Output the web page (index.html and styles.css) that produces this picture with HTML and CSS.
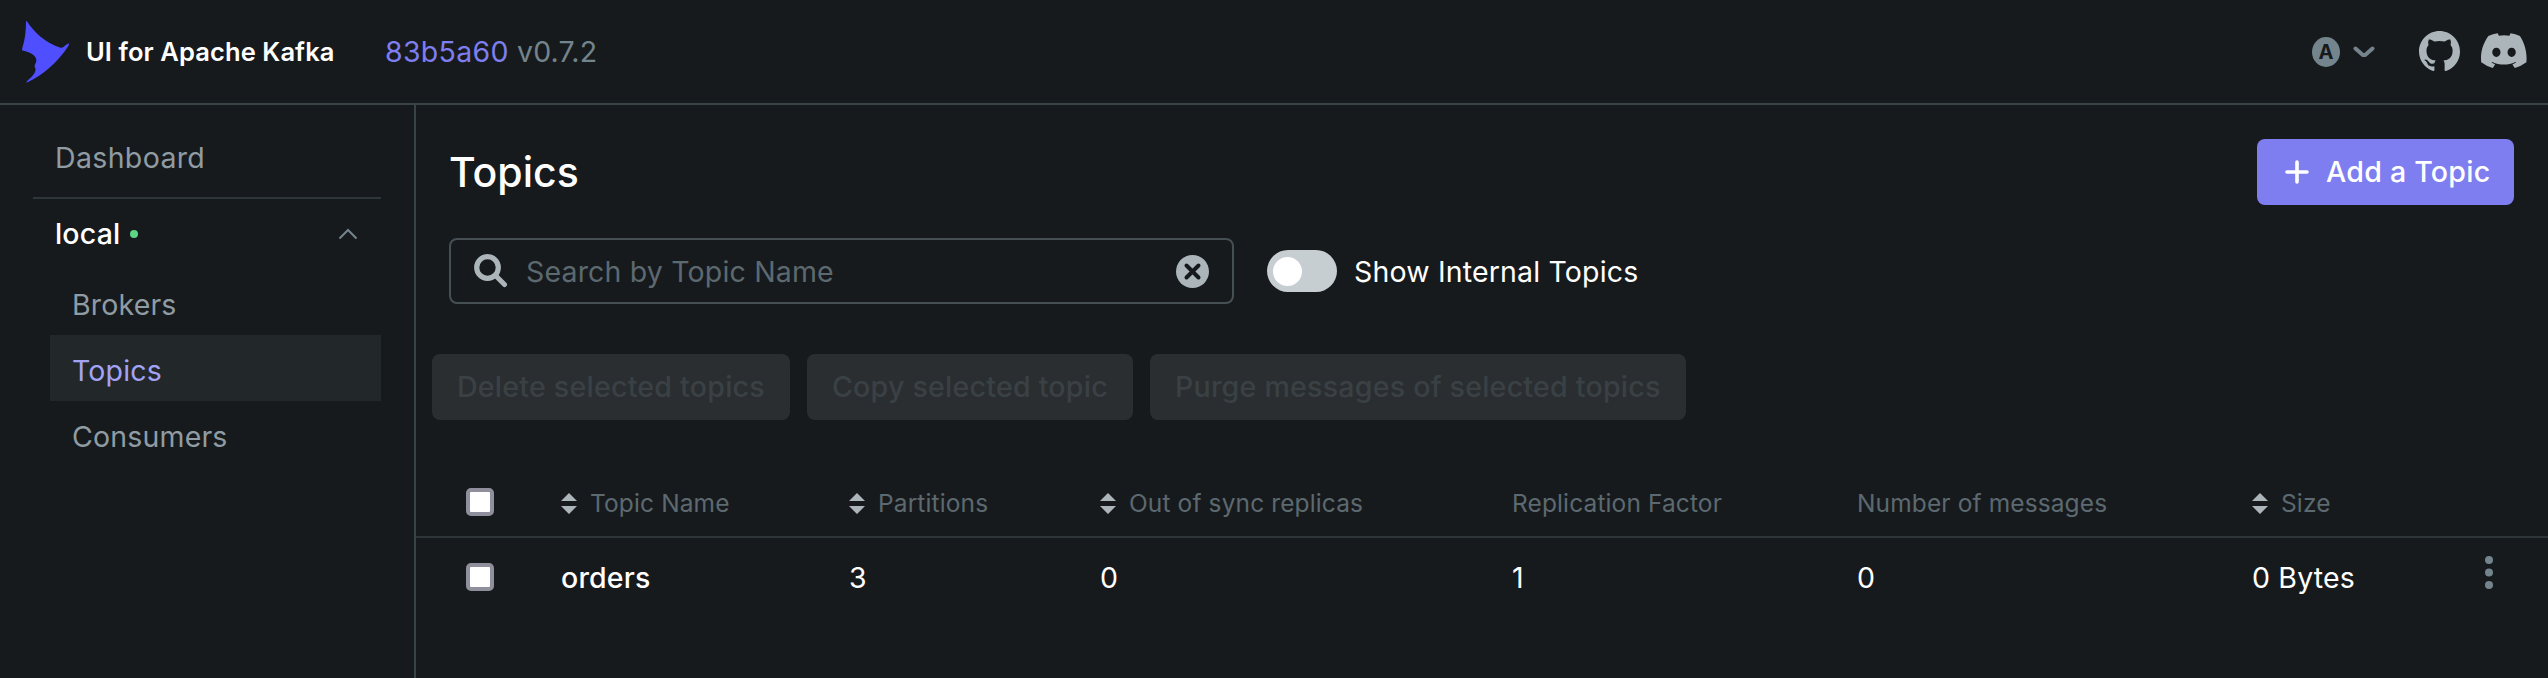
FILE: index.html
```html
<!DOCTYPE html>
<html lang="en">
<head>
<meta charset="utf-8">
<title>UI for Apache Kafka</title>
<link rel="stylesheet" href="styles.css">
</head>
<body>
<header class="navbar">
  <a class="brand">
    <svg class="logo" viewBox="0 0 48 62"><path d="M4.700 0C12 11.500 24 22 38.500 26.700Q40 27 41.500 26Q44 23.500 47 22.300Q47.300 23.500 46 25.500C36 41 21 54 5 61.500Q4 61.500 4.700 60.500C10 55.500 14 52 13.500 47.500Q12 45.500 13 43.500C17 37 12 32 .5 29.500Q-.2 29 .3 27C3 19 4 10 4 .5Z" fill="#4f4fff"/></svg>
    <span class="brand-name">UI for Apache Kafka</span>
  </a>
  <div class="version"><a class="commit">83b5a60</a> v0.7.2</div>
  <div class="nav-actions">
    <span class="avatar">A</span>
    <svg class="chev" viewBox="0 0 22 12"><path d="M2.500 2.500 9 8.300Q11 9.800 13 8.300L19.500 2.500" fill="none" stroke="#73848c" stroke-width="4" stroke-linecap="round"/></svg>
    <svg class="github" viewBox="0 0 16 16"><path fill="#abb5ba" d="M8 0C3.580 0 0 3.580 0 8c0 3.540 2.290 6.530 5.470 7.590.4.070.55-.17.55-.38 0-.19-.01-.82-.01-1.490-2.010.37-2.530-.49-2.690-.94-.09-.23-.48-.94-.82-1.130-.28-.15-.68-.52-.01-.53.63-.01 1.080.58 1.230.82.720 1.210 1.870.87 2.330.66.070-.52.280-.87.510-1.070-1.780-.2-3.640-.89-3.640-3.950 0-.87.310-1.590.82-2.150-.08-.2-.36-1.020.08-2.120 0 0 .67-.21 2.200.82.640-.18 1.320-.27 2-.27s1.360.09 2 .27c1.530-1.040 2.200-.82 2.200-.82.440 1.100.16 1.920.08 2.120.51.560.82 1.270.82 2.150 0 3.070-1.870 3.750-3.650 3.950.29.250.54.730.54 1.480 0 1.070-.01 1.930-.01 2.200 0 .21.150.46.550.38A8.010 8.010 0 0 0 16 8c0-4.420-3.580-8-8-8z"/></svg>
    <svg class="discord" viewBox="0 0 24 19"><path fill="#abb5ba" d="M20.317 1.370A19.800 19.800 0 0 0 15.432 0c-.21.375-.444.865-.608 1.250a18.270 18.270 0 0 0-5.487 0A12.600 12.600 0 0 0 8.720 0a19.700 19.700 0 0 0-4.885 1.370C.533 6.046-.32 10.580.099 15.058A19.900 19.900 0 0 0 6.130 18.100c.462-.63.874-1.295 1.226-1.994a13 13 0 0 1-1.872-.892l.372-.292c3.928 1.793 8.180 1.793 12.062 0l.373.292a12.300 12.300 0 0 1-1.873.892c.36.698.772 1.362 1.225 1.993a19.800 19.800 0 0 0 6.032-3.041c.5-5.177-.838-9.674-3.358-13.688zM8.020 12.330c-1.183 0-2.157-1.085-2.157-2.419s.955-2.419 2.157-2.419c1.210 0 2.176 1.095 2.157 2.420 0 1.333-.956 2.418-2.157 2.418zm7.975 0c-1.183 0-2.157-1.085-2.157-2.419s.955-2.419 2.157-2.419c1.210 0 2.176 1.095 2.157 2.420 0 1.333-.946 2.418-2.157 2.418z"/></svg>
  </div>
</header>
<div class="layout">
  <nav class="sidebar">
    <a class="dashboard">Dashboard</a>
    <div class="cluster">
      <span class="cluster-name">local</span><i class="status"></i>
      <svg class="up" viewBox="0 0 20 12"><path d="M1.500 10.500 10 2 18.500 10.500" fill="none" stroke="#73848c" stroke-width="2"/></svg>
    </div>
    <div class="menu">
      <a class="menu-item">Brokers</a>
      <a class="menu-item active">Topics</a>
      <a class="menu-item">Consumers</a>
    </div>
  </nav>
  <main class="content">
    <div class="heading">
      <h1>Topics</h1>
      <button class="add"><svg class="plus" viewBox="0 0 24 24"><path d="M12 2V22M2 12H22" stroke="#fff" stroke-width="3.600" stroke-linecap="round"/></svg>Add a Topic</button>
    </div>
    <div class="controls">
      <div class="search">
        <svg class="glass" viewBox="0 0 34 34"><circle cx="13.500" cy="13.500" r="10.800" fill="none" stroke="#abb5ba" stroke-width="5.200"/><path d="M22 22 30.500 30.500" stroke="#abb5ba" stroke-width="5" stroke-linecap="round"/></svg>
        <span class="placeholder">Search by Topic Name</span>
        <svg class="clear" viewBox="0 0 33 33"><circle cx="16.500" cy="16.500" r="16.500" fill="#abb5ba"/><path d="M10.500 10.500 22.500 22.500M22.500 10.500 10.500 22.500" stroke="#171a1c" stroke-width="4" stroke-linecap="round"/></svg>
      </div>
      <span class="switch"><i class="knob"></i></span>
      <span class="switch-label">Show Internal Topics</span>
    </div>
    <div class="batch">
      <button class="disabled">Delete selected topics</button>
      <button class="disabled">Copy selected topic</button>
      <button class="disabled">Purge messages of selected topics</button>
    </div>
    <div class="row head">
      <span class="check"><i class="box"></i></span>
      <span><svg class="sort" viewBox="0 0 16 21"><path d="M0 8 8 0 16 8ZM0 13H16L8 21Z" fill="#abb5ba"/></svg>Topic Name</span>
      <span><svg class="sort" viewBox="0 0 16 21"><path d="M0 8 8 0 16 8ZM0 13H16L8 21Z" fill="#abb5ba"/></svg>Partitions</span>
      <span><svg class="sort" viewBox="0 0 16 21"><path d="M0 8 8 0 16 8ZM0 13H16L8 21Z" fill="#abb5ba"/></svg>Out of sync replicas</span>
      <span>Replication Factor</span>
      <span>Number of messages</span>
      <span><svg class="sort" viewBox="0 0 16 21"><path d="M0 8 8 0 16 8ZM0 13H16L8 21Z" fill="#abb5ba"/></svg>Size</span>
      <span></span>
    </div>
    <div class="row data">
      <span class="check"><i class="box"></i></span>
      <span class="topic">orders</span>
      <span>3</span>
      <span>0</span>
      <span>1</span>
      <span>0</span>
      <span>0 Bytes</span>
      <span class="more"><svg class="dots" viewBox="0 0 8 33"><g fill="#73848c"><circle cx="4" cy="4" r="4"/><circle cx="4" cy="16.500" r="4"/><circle cx="4" cy="29" r="4"/></g></svg></span>
    </div>
  </main>
</div>
</body>
</html>
```
FILE: styles.css
```css
* { box-sizing: border-box; }
body {
  margin: 0;
  height: 678px;
  overflow: hidden;
  background: #171a1c;
  color: #fff;
  font-family: Inter, sans-serif;
  font-size: 28.500px;
  letter-spacing: .17px;
  display: flex;
  flex-direction: column;
}
svg { display: block; flex: none; }
h1 { margin: 0; padding-top: 3px; font-weight: 500; font-size: 41px; line-height: 60px; letter-spacing: 0; }
button { border: 0; font: 500 28.600px/34px Inter, sans-serif; letter-spacing: .22px; }

.navbar {
  height: 105px;
  border-bottom: 2px solid #394246;
  display: flex;
  align-items: center;
  padding: 0 21px 0 22px;
}
.brand { display: flex; align-items: center; width: 363px; }
.logo { width: 48px; height: 62px; margin-right: 16px; }
.brand-name { font-weight: 600; font-size: 25.500px; letter-spacing: .1px; white-space: nowrap; }
.version { color: #73848c; }
.commit { color: #7e7ef1; letter-spacing: .3px; }
.nav-actions { margin-left: auto; display: flex; align-items: center; }
.avatar {
  width: 28px;
  height: 30px;
  border-radius: 50%;
  background: #73848c;
  color: #171a1c;
  font-weight: 700;
  font-size: 20px;
  line-height: 30px;
  letter-spacing: 0;
  text-align: center;
}
.chev { width: 22px; height: 12px; margin: 0 44px 0 13px; }
.github { width: 41px; height: 41px; margin-right: 21px; }
.discord { width: 46px; height: 37px; }

.layout { flex: 1; display: flex; }
.sidebar {
  width: 416px;
  border-right: 2px solid #394246;
  padding: 21px 33px;
  color: #8f9ca3;
}
.dashboard {
  display: block;
  height: 73px;
  padding: 15px 22px;
  line-height: 34px;
  letter-spacing: .35px;
  border-bottom: 2px solid #2f3639;
}
.cluster {
  height: 70px;
  padding: 0 23px 0 22px;
  display: flex;
  align-items: center;
  color: #fff;
  font-weight: 500;
}
.cluster-name { padding-bottom: 2px; }
.status { width: 8px; height: 8px; border-radius: 50%; background: #5cd685; margin-left: 10px; }
.up { width: 20px; height: 12px; margin-left: auto; }
.menu { padding-left: 17px; }
.menu-item { display: block; height: 66px; padding-left: 22px; line-height: 72px; }
.active { background: #22282a; color: #a3a3f5; }

.content { flex: 1; }
.heading {
  display: flex;
  justify-content: space-between;
  align-items: flex-start;
  height: 100px;
  padding: 34px 34px 0 33px;
}
.add {
  width: 257px;
  height: 66px;
  border-radius: 8px;
  background: #7e7ef1;
  color: #fff;
  display: flex;
  align-items: center;
  padding: 0 0 0 28px;
  white-space: nowrap;
}
.plus { width: 24px; height: 24px; margin-right: 17px; }
.controls { display: flex; align-items: center; padding: 33px 0 0 33px; }
.search {
  width: 785px;
  height: 66px;
  border: 2px solid #454f54;
  border-radius: 8px;
  display: flex;
  align-items: center;
  padding: 0 23px;
}
.glass { width: 34px; height: 34px; }
.placeholder { color: #5c6970; margin-left: 18px; }
.clear { width: 33px; height: 33px; margin-left: auto; }
.switch { width: 70px; height: 42px; border-radius: 21px; background: #c7ced1; margin-left: 33px; padding: 7px 6px; }
.knob { display: block; width: 29px; height: 29px; border-radius: 50%; background: #fff; }
.switch-label { margin-left: 17px; }
.batch { display: flex; gap: 17px; padding: 50px 0 0 16px; }
.disabled { height: 66px; border-radius: 8px; background: #2a2e31; color: #3a4145; padding: 0 25px; white-space: nowrap; }
.row {
  display: grid;
  grid-template-columns: 112px 288px 251px 412px 345px 395px 233px 1fr;
  align-items: center;
  padding-left: 33px;
}
.row > span { display: flex; align-items: center; white-space: nowrap; }
.head { height: 118px; padding-top: 50px; border-bottom: 2px solid #2f3639; font-size: 24.500px; letter-spacing: .12px; color: #5c6970; }
.head .box { margin-bottom: 3px; }
.data { height: 78px; }
.topic { font-weight: 500; }
.sort { width: 16px; height: 21px; margin-right: 13px; }
.check { padding-left: 17px; }
.box { width: 28px; height: 28px; border: 4px solid #8f8f9d; border-radius: 5px; background: #fff; }
.more { padding-bottom: 9px; }
.dots { width: 8px; height: 33px; }
```
